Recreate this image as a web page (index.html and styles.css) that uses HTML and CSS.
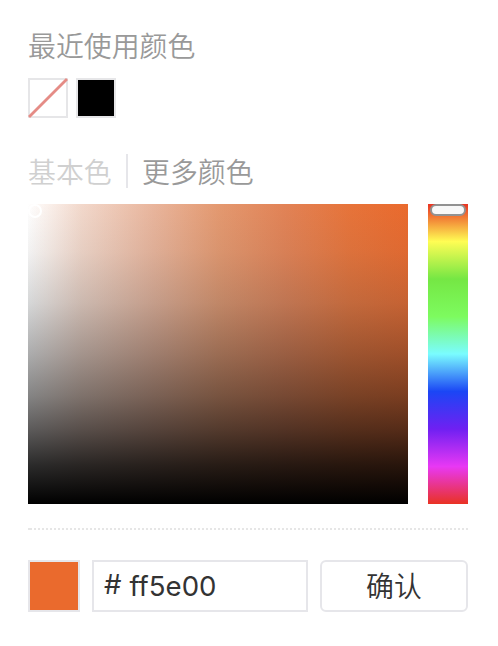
FILE: index.html
```html
<!DOCTYPE html>
<html lang="zh-CN">
<head>
<meta charset="utf-8">
<title>颜色</title>
<link rel="stylesheet" href="styles.css">
</head>
<body>
<main class="picker">
  <h2 class="title">最近使用颜色</h2>
  <div class="recent">
    <button class="swatch" aria-label="无颜色"><svg width="36" height="36" viewBox="0 0 36 36"><path d="M-1 37 37 -1" stroke="#e58c86" stroke-width="2.8"/></svg></button>
    <button class="swatch swatch-black" aria-label="黑色"></button>
  </div>
  <nav class="tabs">
    <span class="tab tab-muted">基本色</span>
    <span class="tab">更多颜色</span>
  </nav>
  <div class="panels">
    <div class="saturation"><i class="cursor"></i></div>
    <div class="hue"><i class="handle"></i></div>
  </div>
  <div class="divider"></div>
  <div class="footer">
    <div class="current"></div>
    <div class="field"><span class="hash">#</span><span class="hex">ff5e00</span></div>
    <button class="confirm">确认</button>
  </div>
</main>
</body>
</html>
```
FILE: styles.css
```css
* {
  box-sizing: border-box;
}

body {
  margin: 0;
  background: #fff;
  font-family: "Noto Sans CJK SC", sans-serif;
  font-weight: 350;
  font-size: 27.9px;
  line-height: 40px;
}

button {
  margin: 0;
  padding: 0;
  background: #fff;
  font: inherit;
}

.picker {
  width: 498px;
  height: 646px;
  padding: 25px 30px 0 28px;
}

.title {
  margin: 0;
  font: inherit;
  color: #999;
}

.recent {
  display: flex;
  gap: 8px;
  margin-top: 13px;
}

.swatch {
  width: 40px;
  height: 40px;
  border: 2px solid #e6e6e8;
}

.swatch svg {
  display: block;
  overflow: visible;
}

.swatch-black {
  background: #000;
}

.tabs {
  display: flex;
  height: 34px;
  margin-top: 36px;
  line-height: 34px;
}

.tab {
  color: #999;
}

.tabs .tab-muted {
  width: 98px;
  color: #d0d0d0;
}

.tabs .tab:last-child {
  padding-left: 14px;
  border-left: 2px solid #e6e6ea;
}

.panels {
  display: flex;
  gap: 20px;
  margin-top: 16px;
}

.saturation {
  width: 380px;
  height: 300px;
  background:
    linear-gradient(rgb(90 90 90 / 0), rgb(90 90 90 / .08) 16%, rgb(60 68 72 / .21) 33%, rgb(30 32 34 / .37) 50%, rgb(20 20 20 / .52) 64%, rgb(16 14 14 / .68) 75%, rgb(6 6 6 / .85) 87%, #000),
    linear-gradient(to right, #fff, #f2d8cb 14%, #e9b59c 33%, #e49970 50%, #e28255 68%, #e77339 85%, #ea6a2d);
}

.cursor {
  display: block;
  width: 14px;
  height: 14px;
  border: 2px solid #fff;
  border-radius: 50%;
}

.hue {
  width: 40px;
  height: 300px;
  background: linear-gradient(#e93323, #fffd54 12.5%, #75e744 25%, #7dfb5f 37.5%, #7afcff 50%, #1b46f5 62.5%, #6f20f2 75%, #e838f4 87.5%, #e93223);
}

.handle {
  display: block;
  width: 36px;
  height: 12px;
  margin: 0 auto;
  border: 2px solid #929292;
  border-radius: 6px;
  background: #f8f8f8;
}

.divider {
  height: 2px;
  margin-top: 24px;
  background:
    linear-gradient(#e6e6e6, #e6e6e6) 0 0 / 4px 2px no-repeat,
    repeating-linear-gradient(to right, transparent 0 2px, #e6e6e6 2px 4px);
}

.footer {
  display: flex;
  gap: 12px;
  margin-top: 30px;
}

.current {
  width: 52px;
  height: 52px;
  border: 2px solid #e6e6ea;
  background: #ea6a2d;
}

.field {
  display: flex;
  gap: 8px;
  width: 216px;
  height: 52px;
  padding-left: 10px;
  border: 2px solid #e6e6ea;
  color: #333;
  font-family: Inter, sans-serif;
  font-size: 27.6px;
  font-weight: 375;
  line-height: 49px;
}

.hash {
  line-height: 45px;
}

.confirm {
  width: 148px;
  height: 52px;
  border: 2px solid #e6e6ea;
  border-radius: 6px;
  padding-bottom: 1px;
  color: #333;
  line-height: 43px;
}
```
